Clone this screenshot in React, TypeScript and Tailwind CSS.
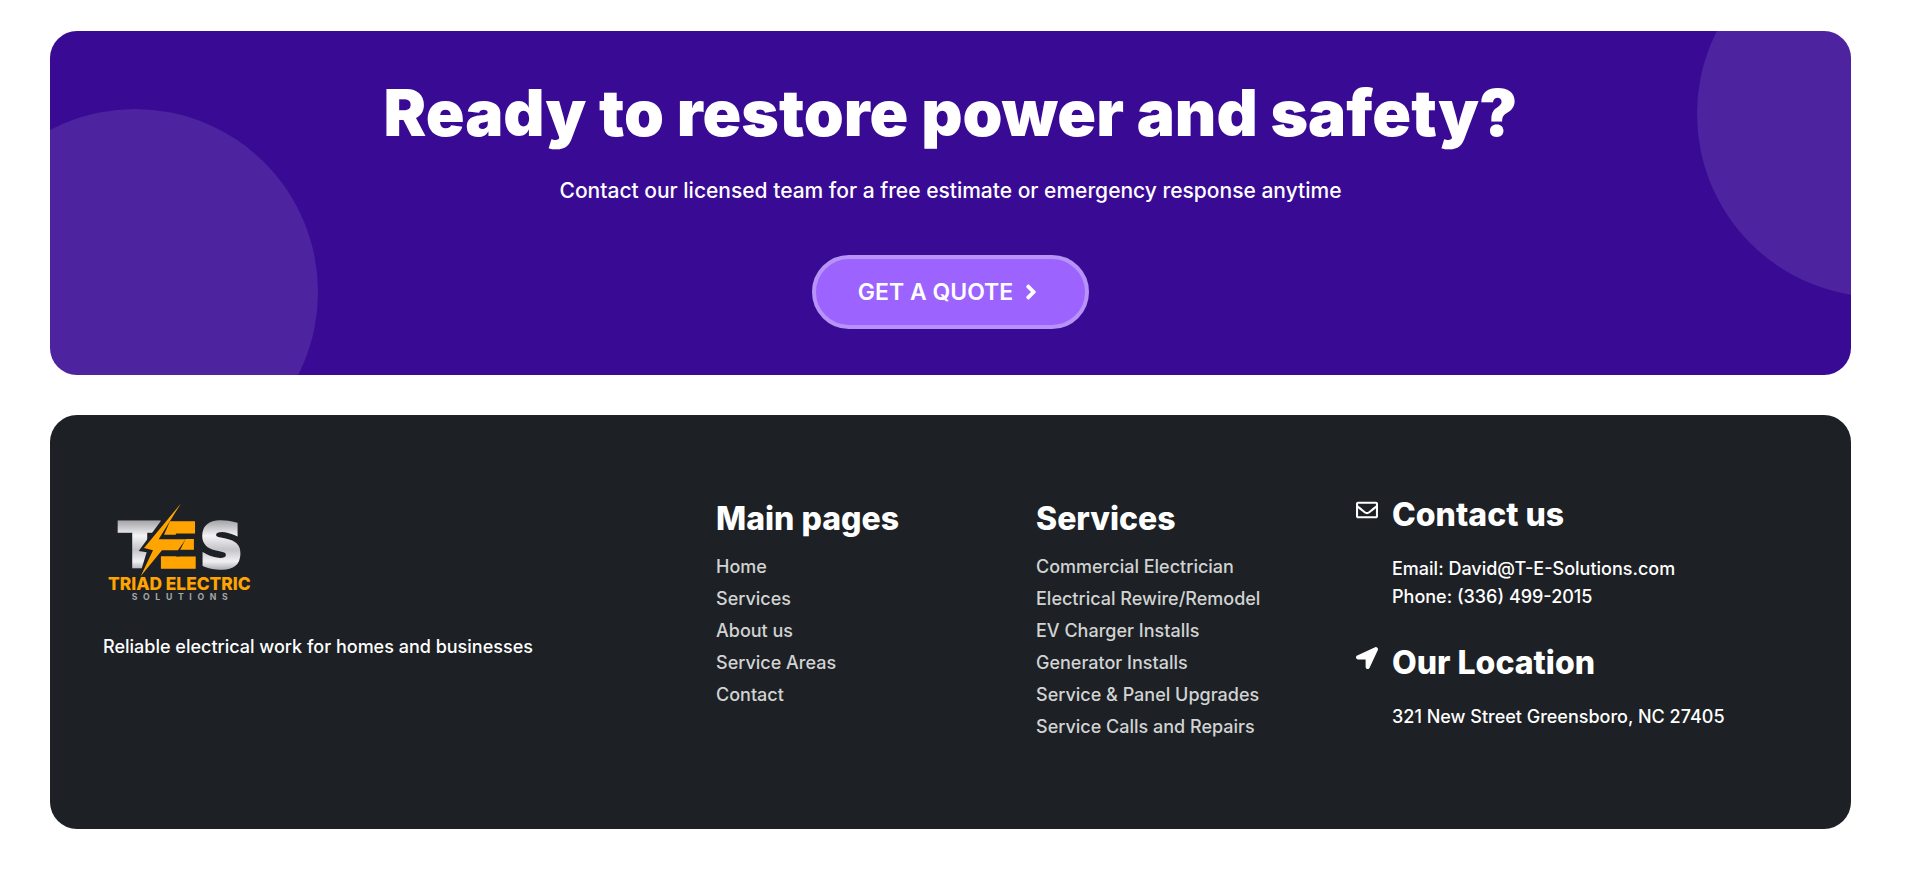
import { FaAngleRight, FaLocationArrow, FaRegEnvelope } from 'react-icons/fa';

const mainPages = [
  { name: 'Home', path: '#home' },
  { name: 'Services', path: '#services' },
  { name: 'About us', path: '#about' },
  { name: 'Service Areas', path: '#areas' },
  { name: 'Contact', path: '#contact' },
];

const services = [
  { name: 'Commercial Electrician', path: '#commercial' },
  { name: 'Electrical Rewire/Remodel', path: '#rewire' },
  { name: 'EV Charger Installs', path: '#ev-charger' },
  { name: 'Generator Installs', path: '#generator' },
  { name: 'Service & Panel Upgrades', path: '#panel' },
  { name: 'Service Calls and Repairs', path: '#repairs' },
];

const Logo = () => (
  <svg width="150" height="104" viewBox="39 30 450 312" role="img" aria-label="Triad Electric Solutions">
    <defs>
      <linearGradient id="steel" gradientUnits="userSpaceOnUse" x1="0" y1="98" x2="0" y2="238">
        <stop offset="0" stopColor="#a9a9ae" />
        <stop offset="0.3" stopColor="#f4f4f6" />
        <stop offset="0.6" stopColor="#c4c4c8" />
        <stop offset="0.85" stopColor="#f1f1f3" />
        <stop offset="1" stopColor="#b9b9bd" />
      </linearGradient>
    </defs>
    <text y="234" fontFamily="DejaVu Sans" fontWeight="700" fontSize="180" strokeWidth="11">
      <tspan x="88" fill="url(#steel)" stroke="url(#steel)">T</tspan>
      <tspan x="202" fill="#ffa400" stroke="#ffa400">E</tspan>
      <tspan x="329" fill="url(#steel)" stroke="url(#steel)">S</tspan>
    </text>
    {/* dark cut between the T and the bolt */}
    <path
      d="M272 43L240 97L222 137H330V150H287L270 184V202H198L182 242L148 262L170 190L146 186L212 97V90Z"
      fill="#1d2125"
    />
    <path d="M273 43L206 151H287L264 184H216L152 262L189 184L162 177Z" fill="#ffa400" />
    <text x="54" y="302" fontFamily="Inter" fontWeight="800" fontSize="52" fill="#ffa400">
      TRIAD ELECTRIC
    </text>
    <text x="125" y="333" fontFamily="Inter" fontWeight="700" fontSize="26" letterSpacing="17" fill="#a5a7aa">
      SOLUTIONS
    </text>
  </svg>
);

const LinkColumn = ({ title, links }: { title: string; links: { name: string; path: string }[] }) => (
  <nav className="pt-1">
    <h4 className="mb-3 text-[32px] leading-10 font-extrabold text-white">{title}</h4>
    <ul>
      {links.map((link) => (
        <li key={link.name}>
          <a href={link.path} className="block text-lg leading-8 font-medium text-[#d2d3d3] hover:text-white">
            {link.name}
          </a>
        </li>
      ))}
    </ul>
  </nav>
);

export default function App() {
  return (
    <div className="min-h-screen bg-white py-[31px] pr-[69px] pl-[50px] font-['Inter',sans-serif] text-white">
      <section className="relative overflow-hidden rounded-[27px] bg-[#390a94] px-6 py-[46px] text-center">
        <div className="absolute -bottom-[100px] -left-[98px] size-[366px] rounded-full bg-white/10" />
        <div className="absolute -top-[100px] -right-[212px] size-[366px] rounded-full bg-white/10" />
        <div className="relative flex flex-col items-center">
          <h2 className="text-[64px] leading-[72px] font-black">Ready to restore power and safety?</h2>
          <p className="mt-[26px] text-[21px] leading-8 font-medium">
            Contact our licensed team for a free estimate or emergency response anytime
          </p>
          <a
            href="#quote"
            className="mt-12 flex h-[74px] items-center gap-1.5 rounded-full border-4 border-[#b893f7] bg-[#9d63ff] px-[42px] text-[23px] leading-8 font-semibold"
          >
            GET A QUOTE
            <FaAngleRight className="size-6" />
          </a>
        </div>
      </section>

      <footer className="mt-10 grid grid-cols-[613fr_320fr_320fr_442fr] rounded-[27px] bg-[#1d2125] px-[53px] pt-[80px] pb-[86px]">
        <div className="pt-1">
          <Logo />
          <p className="mt-7 text-lg leading-8 font-medium">Reliable electrical work for homes and businesses</p>
        </div>
        <LinkColumn title="Main pages" links={mainPages} />
        <LinkColumn title="Services" links={services} />
        <div className="flex flex-col gap-8">
          <div className="flex gap-3.5">
            <FaRegEnvelope className="mt-1 size-[22px] shrink-0" />
            <div>
              <h4 className="text-[32px] leading-10 font-extrabold">Contact us</h4>
              <p className="mt-5 text-lg leading-7 font-medium">
                Email: David@T-E-Solutions.com
                <br />
                Phone: (336) 499-2015
              </p>
            </div>
          </div>
          <div className="flex gap-3.5">
            <FaLocationArrow className="mt-1 size-[22px] shrink-0" />
            <div>
              <h4 className="text-[32px] leading-10 font-extrabold">Our Location</h4>
              <p className="mt-5 text-lg leading-7 font-medium">321 New Street Greensboro, NC 27405</p>
            </div>
          </div>
        </div>
      </footer>
    </div>
  );
}
